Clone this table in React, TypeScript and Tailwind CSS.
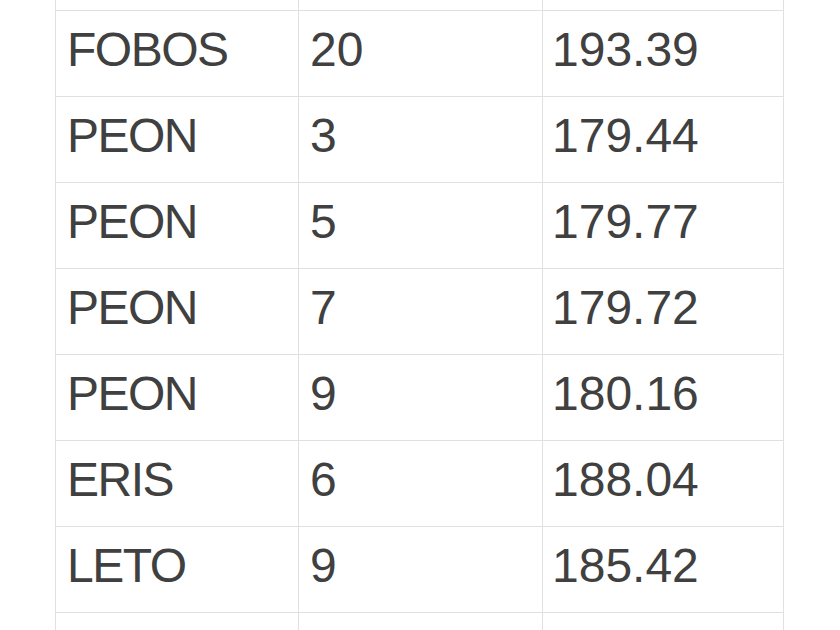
const rows: [string, string, string][] = [
  ["", "", ""],
  ["FOBOS", "20", "193.39"],
  ["PEON", "3", "179.44"],
  ["PEON", "5", "179.77"],
  ["PEON", "7", "179.72"],
  ["PEON", "9", "180.16"],
  ["ERIS", "6", "188.04"],
  ["LETO", "9", "185.42"],
  ["", "", ""],
];

export default function App() {
  return (
    <div className="w-[840px] h-[630px] overflow-hidden bg-white">
      <div
        className="ml-[55px] w-[729px] -mt-[76px] border-l border-r border-[#e0e0e0] text-[#404040] text-[48px]"
        style={{ fontFamily: '"Liberation Sans", Arial, sans-serif' }}
      >
        {rows.map((r, i) => (
          <div
            key={i}
            className="grid grid-cols-[243px_244px_1fr] h-[86px] border-t border-[#e0e0e0]"
          >
            <div className="flex items-center pl-[11px] pb-[8px] border-r border-[#e0e0e0] tracking-[-1.5px]">
              {r[0]}
            </div>
            <div className="flex items-center pl-[11px] pb-[8px] border-r border-[#e0e0e0]">
              {r[1]}
            </div>
            <div className="flex items-center pl-[9px] pb-[8px]">{r[2]}</div>
          </div>
        ))}
      </div>
    </div>
  );
}
